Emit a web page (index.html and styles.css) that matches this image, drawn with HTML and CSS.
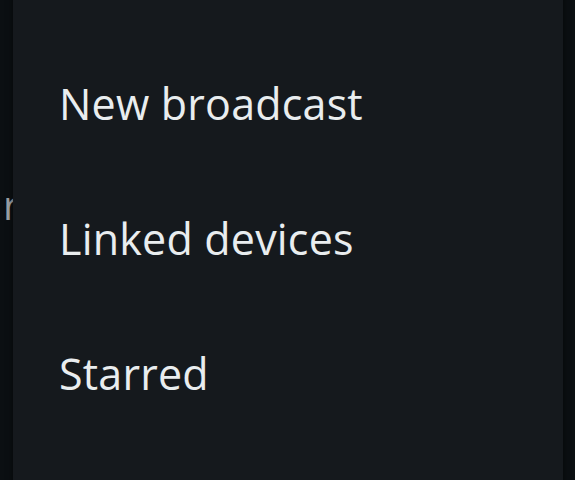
FILE: index.html
```html
<!DOCTYPE html>
<html lang="en">
<head>
    <meta charset="UTF-8">
    <meta name="viewport" content="width=device-width, initial-scale=1.0">
    <title>Menu</title>
    <link rel="stylesheet" href="styles.css">
</head>
<body>

<div class="screen">
    <div class="behind">
        <span class="behind-text">r</span>
    </div>

    <ul class="menu">
        <li class="menu-item">New broadcast</li>
        <li class="menu-item">Linked devices</li>
        <li class="menu-item">Starred</li>
    </ul>
</div>

</body>
</html>
```

FILE: styles.css
```css
body {
    margin: 0;
    padding: 0;
    background-color: #0b0f12;
    font-family: "Open Sans", "Noto Sans", sans-serif;
    overflow: hidden;
}

.screen {
    position: relative;
    width: 575px;
    height: 480px;
    overflow: hidden;
}

.behind {
    padding: 178px 0 0 3px;
}

.behind-text {
    color: #9ea2a6;
    font-size: 40px;
    white-space: nowrap;
    line-height: 54px;
}

.menu {
    position: absolute;
    top: -20px;
    left: 13px;
    width: 550px;
    height: 540px;
    margin: 0;
    padding: 56px 0 0 0;
    list-style: none;
    background-color: #15191d;
    box-shadow: 0 0 6px rgba(0, 0, 0, 0.6);
    box-sizing: border-box;
}

.menu-item {
    padding-left: 46px;
    font-size: 43px;
    line-height: 135px;
    letter-spacing: 0.2px;
    color: #e9edef;
}
```
